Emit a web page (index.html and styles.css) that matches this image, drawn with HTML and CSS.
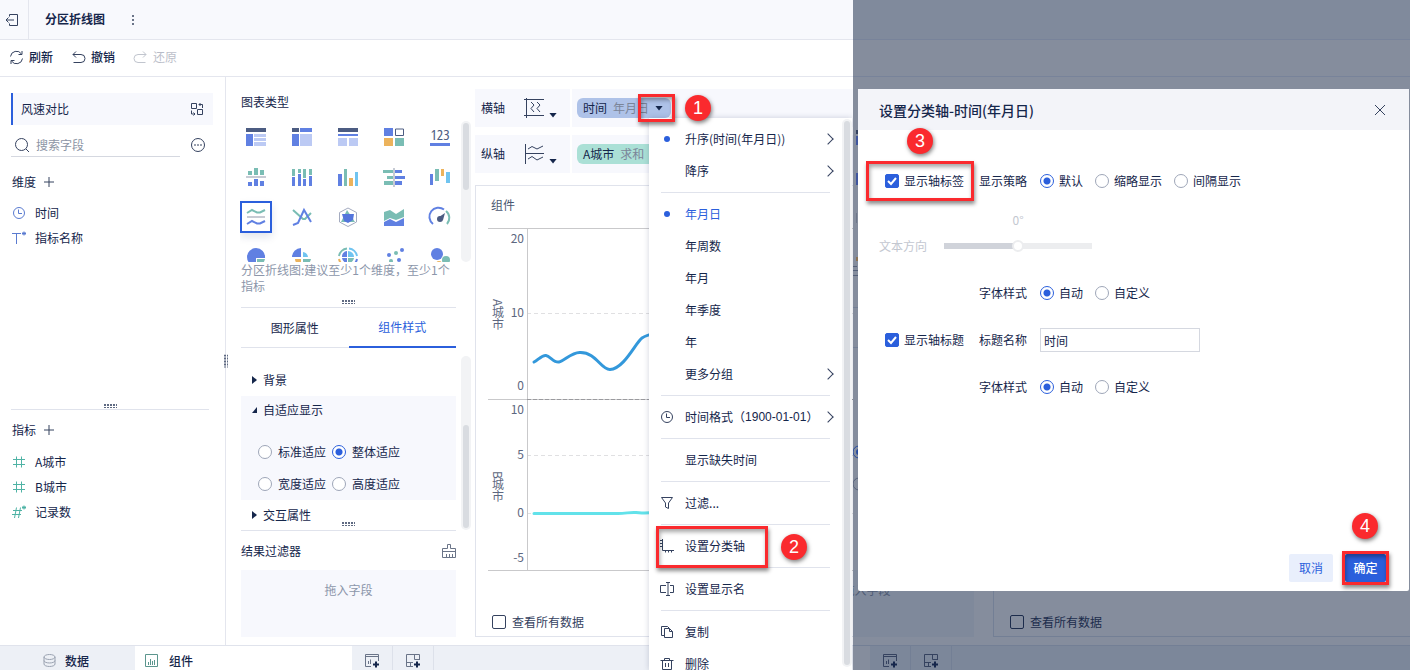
FILE: index.html
```html
<!DOCTYPE html>
<html lang="zh-CN">

<head>
    <meta charset="UTF-8">
    <meta name="viewport" content="width=device-width, initial-scale=1.0">
    <title>分区折线图</title>
    <link rel="stylesheet" href="styles.css">
</head>

<body>

    <div class="page">
        <div class="workspace">
            <header class="topbar">
                <button class="exit" aria-label="退出">
                    <svg width="14" height="14" viewBox="0 0 14 14" class="line"><path d="M4.500 3.500V1.500H12.500V12.500H4.500V10.500M9 7H1M3.500 4.500L1 7L3.500 9.500" /></svg>
                </button>
                <h1>分区折线图</h1>
                <button class="more" aria-label="更多">
                    <svg width="4" height="12" viewBox="0 0 4 12"><path d="M1 1h2v2H1zM1 5h2v2H1zM1 9h2v2H1z" fill="#6a7488" /></svg>
                </button>
            </header>

            <div class="toolbar">
                <button>
                    <svg width="15" height="15" viewBox="0 0 15 15" class="line"><path d="M1.500 6.500A6 6 0 0 1 12.500 4M13.500 8.500A6 6 0 0 1 2.500 11M13 1v3.500H9.500M2 14v-3.500H5.500" /></svg>
                    刷新
                </button>
                <button>
                    <svg width="15" height="15" viewBox="0 0 15 15" class="line"><path d="M5 1.500L2 4.500L5 7.500M2 4.500H10A3.500 3.500 0 0 1 10 12.500H2.500" /></svg>
                    撤销
                </button>
                <button disabled>
                    <svg width="15" height="15" viewBox="0 0 15 15" class="line"><path d="M10 1.500L13 4.500L10 7.500M13 4.500H5A3.500 3.500 0 0 0 5 12.500H12.500" /></svg>
                    还原
                </button>
            </div>

            <div class="main">
                <aside class="fields">
                    <section class="dimensions">
                        <div class="dataset">
                            <span>风速对比</span>
                            <button aria-label="切换数据">
                                <svg width="14" height="14" viewBox="0 0 14 14" class="line"><path d="M1.500 1.500h5v5h-5zM7.500 7.500h5v5h-5zM9 2.500h3.500V6M10.500 1L9 2.500L10.500 4M1.500 8.500V12H5M3.500 10.500L5 12L3.500 13.500" /></svg>
                            </button>
                        </div>
                        <div class="search-row">
                            <label class="search">
                                <svg width="16" height="16" viewBox="0 0 16 16" class="line"><circle cx="7.500" cy="7.500" r="6" /><path d="M12 12L15 15" /></svg>
                                <input type="text" placeholder="搜索字段" aria-label="搜索字段">
                            </label>
                            <button aria-label="更多字段操作">
                                <svg width="16" height="16" viewBox="0 0 16 16" class="line"><circle cx="8" cy="8" r="6.500" /><path d="M4 8h2M7 8h2M10 8h2" /></svg>
                            </button>
                        </div>
                        <h2>维度 <button class="plus" aria-label="添加维度"><svg width="10" height="10" viewBox="0 0 10 10" class="line"><path d="M5 0V10M0 5H10" /></svg></button></h2>
                        <ul>
                            <li>
                                <svg width="14" height="14" viewBox="0 0 14 14" class="line blue"><circle cx="7" cy="7" r="5.500" /><path d="M6.500 3.500V7.500H10" /></svg>
                                时间
                            </li>
                            <li>
                                <svg width="14" height="14" viewBox="0 0 14 14" class="line blue"><path d="M0 2.500H9M4.500 2.500V13M10 2.500H14M12 0.500V4.500M10.500 1L13.500 4M13.500 1L10.500 4" /></svg>
                                指标名称
                            </li>
                        </ul>
                    </section>
                    <div class="splitter"><i class="dots"></i></div>
                    <section class="metrics">
                        <h2>指标 <button class="plus" aria-label="添加指标"><svg width="10" height="10" viewBox="0 0 10 10" class="line"><path d="M5 0V10M0 5H10" /></svg></button></h2>
                        <ul>
                            <li>
                                <svg width="14" height="14" viewBox="0 0 14 14" class="line teal"><path d="M1 4.500H13M1 9.500H13M4.500 1.500V12.500M9.500 1.500V12.500" /></svg>
                                A城市
                            </li>
                            <li>
                                <svg width="14" height="14" viewBox="0 0 14 14" class="line teal"><path d="M1 4.500H13M1 9.500H13M4.500 1.500V12.500M9.500 1.500V12.500" /></svg>
                                B城市
                            </li>
                            <li>
                                <svg width="14" height="14" viewBox="0 0 14 14" class="line teal"><path d="M1 5.500H10M0 9.500H9M4.500 2.500L2.500 13M8.500 2.500L6.500 13M10 2.500H14M12 0.500V4.500M10.500 1L13.500 4M13.500 1L10.500 4" /></svg>
                                记录数
                            </li>
                        </ul>
                    </section>
                    <i class="dots side-dots"></i>
                </aside>

                <section class="config">
                    <h2>图表类型</h2>
                    <div class="scroll-area types-area">
                        <div class="chart-types">
                            <button aria-label="分组表"><svg viewBox="0 0 32 32"><path fill="#4c5c82" d="M6 7h20v4H6z" /><path fill="#6080e2" d="M6 13h7v12H6z" /><path fill="#bccaf4" d="M14 13h12v3H14zM14 17h12v3H14zM14 21h12v4H14z" /></svg></button>
                            <button aria-label="交叉表"><svg viewBox="0 0 32 32"><path fill="#4c5c82" d="M6 7h7v4H6z" /><path fill="#6080e2" d="M14 7h12v4H14zM6 13h7v12H6z" /><path fill="#bccaf4" d="M14 13h12v12H14z" /></svg></button>
                            <button aria-label="明细表"><svg viewBox="0 0 32 32"><path fill="#4c5c82" d="M6 7h20v4H6z" /><path fill="#6080e2" d="M6 13h20v2H6z" /><path fill="#bccaf4" d="M6 17h9v8H6zM17 17h9v8h-9z" /></svg></button>
                            <button aria-label="颜色表格"><svg viewBox="0 0 32 32"><path fill="#6080e2" d="M6 7h9v8H6z" /><path fill="none" stroke="#4c5c82" d="M17.500 8h8v6.500h-8z" /><path fill="#ecb35c" d="M6 17h9v8H6z" /><path fill="#7abdb4" d="M17 17h9v8h-9z" /></svg></button>
                            <button aria-label="指标卡"><svg viewBox="0 0 32 32"><text x="16" y="19" class="kpi">123</text><path fill="#6080e2" d="M6 22h20v3H6z" /></svg></button>

                            <button aria-label="对比柱形图"><svg viewBox="0 0 32 32"><path fill="#7abdb4" d="M8 10h4v4H8zM14 7h4v7h-4zM20 9h4v5h-4z" /><path fill="#c7cbd4" d="M6 15h20v2H6z" /><path fill="#6080e2" d="M8 21h4v4H8zM14 18h4v7h-4zM20 20h4v5h-4z" /></svg></button>
                            <button aria-label="堆积柱形图"><svg viewBox="0 0 32 32"><path fill="#7abdb4" d="M6 8h3v7H6zM12 8h3v4h-3zM17 8h3v9h-3zM23 8h3v6h-3z" /><path fill="#6080e2" d="M6 16h3v9H6zM12 13h3v12h-3zM17 18h3v7h-3zM23 15h3v10h-3z" /></svg></button>
                            <button aria-label="多系列柱形图"><svg viewBox="0 0 32 32"><path fill="#6080e2" d="M6 13h4v12H6z" /><path fill="#7abdb4" d="M12 8h3v17h-3z" /><path fill="#ecb35c" d="M17 17h4v8h-4z" /><path fill="#70c4f0" d="M23 11h3v14h-3z" /></svg></button>
                            <button aria-label="对比条形图"><svg viewBox="0 0 32 32"><path fill="#7abdb4" d="M5 9h10v3H5zM9 15h6v3H9zM6 20h9v4H6z" /><path fill="#c7cbd4" d="M15 7h2v19h-2z" /><path fill="#6080e2" d="M17 9h7v3h-7zM17 15h10v3H17zM17 20h7v4h-7z" /></svg></button>
                            <button aria-label="瀑布图"><svg viewBox="0 0 32 32"><path fill="#6080e2" d="M6 13h3v11H6z" /><path fill="#7abdb4" d="M11 8h4v12h-4z" /><path fill="#ecb35c" d="M17 8h3v7h-3z" /><path fill="#70c4f0" d="M22 11h4v11h-4z" /></svg></button>

                            <button class="selected" aria-label="分区折线图"><svg viewBox="0 0 32 32"><path fill="#c7cbd4" d="M7 15h18v2H7z" /><path class="stroke" stroke="#7abdb4" d="M7 12L12 9L17 11.500H20L25 9" /><path class="stroke" stroke="#6080e2" d="M7 23L12 20L17 22.500H20L25 20" /></svg></button>
                            <button aria-label="多系列折线图"><svg viewBox="0 0 32 32"><path class="stroke" stroke="#7abdb4" d="M7 9L17 18H19L25 12" /><path class="stroke" stroke="#6080e2" d="M7 24L12 22L18 9L25 21" /></svg></button>
                            <button aria-label="雷达图"><svg viewBox="0 0 32 32"><path fill="none" stroke="#a4abc0" d="M16 7L24.500 11.500V21L16 25.500L7.500 21V11.500z" /><path fill="#7abdb4" d="M15 9L23 21H9z" /><path fill="#5475dc" d="M10 13H22L21 19L16 22L12 20z" /></svg></button>
                            <button aria-label="面积图"><svg viewBox="0 0 32 32"><path fill="#7abdb4" d="M6 11L12 9L18 13L26 8V16L18 19L12 17L6 20z" /><path fill="#6080e2" d="M6 21L12 18L18 21L26 17V25H6z" /></svg></button>
                            <button aria-label="仪表盘"><svg viewBox="0 0 32 32"><path class="stroke" stroke="#6080e2" d="M9 23A9 9 0 0 1 20 8.500" /><path class="stroke" stroke="#7abdb4" d="M22 10A9 9 0 0 1 23 23" /><circle cx="16" cy="18" r="3" fill="#4c5c82" /><path d="M15 16L21 12L19 19z" fill="#4c5c82" /></svg></button>

                            <button aria-label="饼图"><svg viewBox="0 0 32 32"><path fill="#6080e2" d="M16 7A9 9 0 1 0 16 25V17H25A9 9 0 0 0 16 7z" /><path fill="#7abdb4" d="M17 18H25A9 9 0 0 1 17 25z" /></svg></button>
                            <button aria-label="玫瑰图"><svg viewBox="0 0 32 32"><path fill="#6080e2" d="M15 7V16H6A9 9 0 0 1 15 7z" /><path fill="#70c4f0" d="M17 11A6 6 0 0 1 22 16H17z" /><path fill="#ecb35c" d="M9 18H15V24A6 6 0 0 1 9 18z" /><path fill="#7abdb4" d="M17 18H25A9 9 0 0 1 17 25z" /></svg></button>
                            <button aria-label="多层饼图"><svg viewBox="0 0 32 32"><path class="stroke" stroke="#7abdb4" d="M7 15A9 9 0 0 1 15 7.500" /><path class="stroke" stroke="#70c4f0" d="M17 7.500A9 9 0 0 1 25 15" /><path class="stroke" stroke="#ecb35c" d="M7 18A9 9 0 0 0 15 25" /><path class="stroke" stroke="#6080e2" d="M25 18A9 9 0 0 1 17 25" /><path fill="#6080e2" d="M15 10V16H10A6 6 0 0 1 15 10zM10 17H15V22A6 6 0 0 1 10 17z" /><path fill="#70c4f0" d="M16 10A6 6 0 0 1 22 16H16z" /><path fill="#7abdb4" d="M16 17H22A6 6 0 0 1 16 22z" /></svg></button>
                            <button aria-label="散点图"><svg viewBox="0 0 32 32"><g fill="#6080e2"><circle cx="24" cy="9" r="2" /><circle cx="11" cy="14" r="2" /><circle cx="21" cy="19" r="2" /></g><g fill="#7abdb4"><circle cx="18" cy="12" r="2" /><circle cx="13" cy="20" r="2" /></g></svg></button>
                            <button aria-label="聚合气泡图"><svg viewBox="0 0 32 32"><circle cx="13" cy="13" r="6" fill="#6080e2" /><circle cx="22" cy="19" r="4" fill="#7abdb4" /><circle cx="15" cy="23" r="3" fill="#ecb35c" /></svg></button>
                        </div>
                        <div class="scrollbar"><i class="thumb-top"></i></div>
                    </div>
                    <p class="hint">分区折线图:建议至少1个维度，至少1个指标</p>
                    <div class="splitter"><i class="dots"></i></div>
                    <div class="tabs">
                        <button>图形属性</button>
                        <button class="active">组件样式</button>
                    </div>
                    <div class="scroll-area style-area">
                        <div class="accordion">
                            <button class="fold">背景</button>
                            <div class="opened">
                                <button class="fold open">自适应显示</button>
                                <div class="options">
                                    <label><input type="radio" name="fit"> 标准适应</label>
                                    <label><input type="radio" name="fit" checked> 整体适应</label>
                                    <label><input type="radio" name="fit"> 宽度适应</label>
                                    <label><input type="radio" name="fit"> 高度适应</label>
                                </div>
                            </div>
                            <button class="fold">交互属性</button>
                        </div>
                        <div class="scrollbar"><i class="thumb-bottom"></i></div>
                    </div>
                    <div class="splitter overlap"><i class="dots"></i></div>
                    <div class="filter-head">
                        <h2>结果过滤器</h2>
                        <button aria-label="清空过滤器">
                            <svg width="14" height="14" viewBox="0 0 14 14" class="line soft"><path d="M5.500 4.500V0.500H8.500V4.500H13.500V13.500H0.500V4.500H5.500M0.500 7.500H13.500M4.500 10V13M7.500 10V13M10.500 10V13" /></svg>
                        </button>
                    </div>
                    <div class="dropzone">拖入字段</div>
                </section>

                <section class="content">
                    <div class="axis-row">
                        <div class="axis-label">
                            横轴
                            <svg width="20" height="20" viewBox="0 0 20 20" class="line"><path d="M0 1.500H20M0 17.500H20M2.500 0V20M7 4L10 7L7 10.500L10 14M13 4L16 7L13 10.500L16 14" /></svg>
                            <i class="caret"></i>
                        </div>
                        <div class="axis-fields">
                            <span class="chip chip-dim">
                                <b>时间</b> 年月日 <i class="caret"></i>
                                <span class="mark mark-arrow"></span>
                                <span class="badge badge-1">1</span>
                            </span>
                        </div>
                    </div>
                    <div class="axis-row">
                        <div class="axis-label">
                            纵轴
                            <svg width="20" height="20" viewBox="0 0 20 20" class="line"><path d="M1.500 0V20M1 9.500H20M4 5L8 2.500L13 5L19 2M4 15L8 12.500L13 16L19 13" /></svg>
                            <i class="caret"></i>
                        </div>
                        <div class="axis-fields">
                            <span class="chip chip-metric"><b>A城市</b> 求和</span>
                        </div>
                    </div>
                    <div class="preview">
                        <h3>组件</h3>
                        <svg class="chart" role="img" aria-label="分区折线图">
                            <g stroke="#e0e0e2" stroke-dasharray="4 3">
                                <line x1="39" y1="85.500" x2="100%" y2="85.500" />
                                <line x1="39" y1="227.500" x2="100%" y2="227.500" />
                                <line x1="39" y1="285.500" x2="100%" y2="285.500" />
                            </g>
                            <g stroke="#c9c9cb">
                                <line x1="0" y1="0.500" x2="100%" y2="0.500" />
                                <line x1="0" y1="171.500" x2="100%" y2="171.500" />
                                <line x1="0" y1="342.500" x2="100%" y2="342.500" />
                                <line x1="39.500" y1="0" x2="39.500" y2="343" />
                            </g>
                            <line x1="39" y1="171.500" x2="100%" y2="171.500" stroke="#9a9a9e" stroke-dasharray="4 2" />
                            <g class="ticks">
                                <text x="36" y="15">20</text>
                                <text x="36" y="89">10</text>
                                <text x="36" y="162">0</text>
                                <text x="36" y="186">10</text>
                                <text x="36" y="231">5</text>
                                <text x="36" y="289">0</text>
                                <text x="36" y="334">-5</text>
                            </g>
                            <text x="10" y="71" class="axis-title">A城市</text>
                            <text x="10" y="243" class="axis-title">B城市</text>
                            <path class="series" stroke="#3398db" d="M46 134C50 132 54 127 58 127.500S66 135 71 134S84 124 92 124.500C108 124 113 142 122 141.500C136 141 148 114 154 110C160 106 165 106 172 104" />
                            <path class="series" stroke="#62e2ea" d="M46 285.500H130C138 285.500 142 284 148 284.500S158 286 166 284" />
                        </svg>
                        <label class="show-all"><input type="checkbox"> 查看所有数据</label>
                    </div>
                </section>
            </div>

            <footer class="bottom-tabs">
                <button class="tab-data">
                    <svg width="13" height="13" viewBox="0 0 13 13" class="line gray"><ellipse cx="6.500" cy="3" rx="5.500" ry="2.500" /><path d="M1 3V10C1 13.300 12 13.300 12 10V3M1 6.500C1 9.800 12 9.800 12 6.500" /></svg>
                    数据
                </button>
                <button class="tab-component">
                    <svg width="13" height="13" viewBox="0 0 13 13" class="line green"><path d="M0.500 0.500H12.500V12.500H0.500zM3.500 8V11M5.500 5V11M7.500 7V11M9.500 6V11" /></svg>
                    组件
                </button>
                <button class="tab-add" aria-label="添加组件">
                    <svg width="14" height="14" viewBox="0 0 14 14" class="line soft"><path d="M13.500 7V0.500H0.500V12.500H6M0.500 2.500H13.500M3.500 7V10M5.500 5.500V10" /><path class="plus-sign" d="M8 10.500H14M11 7.500V13.500" /></svg>
                </button>
                <button class="tab-add" aria-label="添加仪表板">
                    <svg width="14" height="14" viewBox="0 0 14 14" class="line soft"><path d="M13.500 6V0.500H0.500V12.500H7M8.500 0.500V5.500H13.500M0.500 8.500H7M4.500 8.500V12.500" /><path class="plus-sign" d="M8 10.500H14M11 7.500V13.500" /></svg>
                </button>
            </footer>

            <div class="menu">
                <ul>
                    <li><button><span class="ico"><i class="dot"></i></span>升序(时间(年月日))<i class="arrow"></i></button></li>
                    <li class="line-after"><button><span class="ico"></span>降序<i class="arrow"></i></button></li>
                    <li><button class="current"><span class="ico"><i class="dot"></i></span>年月日</button></li>
                    <li><button><span class="ico"></span>年周数</button></li>
                    <li><button><span class="ico"></span>年月</button></li>
                    <li><button><span class="ico"></span>年季度</button></li>
                    <li><button><span class="ico"></span>年</button></li>
                    <li class="line-after"><button><span class="ico"></span>更多分组<i class="arrow"></i></button></li>
                    <li class="line-after"><button>
                        <span class="ico"><svg width="14" height="14" viewBox="0 0 14 14" class="line"><circle cx="7" cy="7" r="5.500" /><path d="M6.500 3.500V7.500H10" /></svg></span>时间格式（<span class="latin">1900-01-01</span>）<i class="arrow"></i></button></li>
                    <li class="line-after"><button><span class="ico"></span>显示缺失时间</button></li>
                    <li class="line-after"><button>
                        <span class="ico"><svg width="14" height="14" viewBox="0 0 14 14" class="line"><path d="M1.500 1.500H12.500L8.500 7V12.500L5.500 11V7z" /></svg></span>过滤...</button></li>
                    <li class="line-after"><button>
                        <span class="ico"><svg width="14" height="14" viewBox="0 0 14 14" class="line"><path d="M2.500 0V11.500H14M0 1.500H2.500M0 4.500H2.500M0 7.500H2.500M5.500 11V13.500M8.500 11V13.500M11.500 11V13.500" /></svg></span>设置分类轴</button>
                        <span class="mark mark-axis"></span>
                        <span class="badge badge-2">2</span>
                    </li>
                    <li class="line-after"><button>
                        <span class="ico"><svg width="14" height="14" viewBox="0 0 14 14" class="line"><path d="M6 3.500H0.500V10.500H6M10 3.500H13.500V10.500H10M6 0.500H10M8 0.500V13.500M6 13.500H10" /></svg></span>设置显示名</button></li>
                    <li><button>
                        <span class="ico"><svg width="14" height="14" viewBox="0 0 14 14" class="line"><path d="M4.500 3.500H9.500L12.500 6.500V12.500H4.500zM9.500 3.500V6.500H12.500M4 10.500H1.500V1.500H7.500L9 3" /></svg></span>复制</button></li>
                    <li><button>
                        <span class="ico"><svg width="14" height="14" viewBox="0 0 14 14" class="line"><path d="M0.500 3.500H13.500M4.500 3V1.500H9.500V3M2.500 3.500V12.500H11.500V3.500M5.500 6V10M8.500 6V10" /></svg></span>删除</button></li>
                </ul>
                <div class="scrollbar"><i class="thumb-full"></i></div>
            </div>
        </div>

        <div class="dialog-view">
            <div class="dimmed">
                <div class="dim-topbar"></div>
                <div class="dim-toolbar"></div>
                <div class="dim-main">
                    <div class="dim-dropzone">拖入字段</div>
                    <div class="dim-preview">
                        <label class="show-all"><input type="checkbox"> 查看所有数据</label>
                    </div>
                </div>
                <div class="dim-tabs">
                    <span>
                        <svg width="14" height="14" viewBox="0 0 14 14" class="line"><path d="M13.500 7V0.500H0.500V12.500H6M0.500 2.500H13.500M3.500 7V10M5.500 5.500V10" /><path class="plus-sign" d="M8 10.500H14M11 7.500V13.500" /></svg>
                    </span>
                    <span>
                        <svg width="14" height="14" viewBox="0 0 14 14" class="line"><path d="M13.500 6V0.500H0.500V12.500H7M8.500 0.500V5.500H13.500M0.500 8.500H7M4.500 8.500V12.500" /><path class="plus-sign" d="M8 10.500H14M11 7.500V13.500" /></svg>
                    </span>
                </div>
                <!-- edges of the chart icons, lines and radios that stay visible left of the dialog -->
                <svg class="dim-edge" width="5" height="420" viewBox="0 0 5 420">
                    <path fill="#34425f" d="M3 41h2v4H3z" />
                    <path fill="#40569e" d="M3 47h2v9H3zM3 84h2v12H3z" />
                    <path fill="#6d7689" d="M3 124h1v10H3z" />
                    <path fill="#8b7355" d="M3 168h2v4H3z" />
                    <path stroke="#56617a" d="M0 177.500H4M0 181.500H5M0 186.500H5" />
                    <path stroke="#737f95" d="M0 218.500H5M0 258.500H5" />
                    <circle cx="6" cy="363" r="6" fill="none" stroke="#244a9f" />
                    <circle cx="6" cy="363" r="3" fill="#244a9f" />
                    <circle cx="6" cy="395" r="6" fill="none" stroke="#56617a" />
                </svg>
            </div>

            <form class="dialog">
                <header>
                    <h2>设置分类轴-时间(年月日)</h2>
                    <button type="button" aria-label="关闭">
                        <svg width="12" height="12" viewBox="0 0 12 12" class="line"><path d="M1 1L11 11M11 1L1 11" /></svg>
                    </button>
                </header>
                <div class="form-body">
                    <div class="form-row">
                        <div class="toggle">
                            <label><input type="checkbox" checked> 显示轴标签</label>
                            <span class="mark mark-label"></span>
                            <span class="badge badge-3">3</span>
                        </div>
                        <span class="name">显示策略</span>
                        <label><input type="radio" name="strategy" checked> 默认</label>
                        <label><input type="radio" name="strategy"> 缩略显示</label>
                        <label><input type="radio" name="strategy"> 间隔显示</label>
                    </div>
                    <div class="slider-row">
                        <label for="direction">文本方向</label>
                        <div class="slider">
                            <output for="direction">0°</output>
                            <input type="range" id="direction" min="-90" max="90" value="0" disabled>
                        </div>
                    </div>
                    <div class="form-row">
                        <div class="toggle"></div>
                        <span class="name">字体样式</span>
                        <label><input type="radio" name="labelFont" checked> 自动</label>
                        <label><input type="radio" name="labelFont"> 自定义</label>
                    </div>
                    <div class="form-row">
                        <div class="toggle">
                            <label><input type="checkbox" checked> 显示轴标题</label>
                        </div>
                        <label class="name" for="axisTitle">标题名称</label>
                        <input type="text" id="axisTitle" value="时间">
                    </div>
                    <div class="form-row">
                        <div class="toggle"></div>
                        <span class="name">字体样式</span>
                        <label><input type="radio" name="titleFont" checked> 自动</label>
                        <label><input type="radio" name="titleFont"> 自定义</label>
                    </div>
                </div>
                <div class="actions">
                    <button type="button" class="cancel">取消</button>
                    <div class="confirm-wrap">
                        <button type="button" class="confirm">确定</button>
                        <span class="mark mark-confirm"></span>
                        <span class="badge badge-4">4</span>
                    </div>
                </div>
            </form>
        </div>
    </div>

</body>

</html>
```

FILE: styles.css
```css
* {
    box-sizing: border-box;
}

body {
    margin: 0;
    font-family: "Noto Sans CJK SC", sans-serif;
    font-size: 12px;
    line-height: 16px;
    color: #15264b;
    background: #fff;
}

h1,
h2,
h3,
p,
ul {
    margin: 0;
    padding: 0;
    font-size: 12px;
    font-weight: normal;
    list-style: none;
}

button {
    padding: 0;
    border: none;
    background: none;
    font: inherit;
    color: inherit;
    cursor: pointer;
    display: flex;
    align-items: center;
}

svg {
    display: block;
    flex: none;
}

.line {
    fill: none;
    stroke: #35425f;
    stroke-width: 1;
}

.line.blue {
    stroke: #5a7bd0;
}

.line.teal {
    stroke: #4fb3a5;
}

.line.gray {
    stroke: #9aa2b1;
}

.line.green {
    stroke: #5c968e;
}

.line.soft {
    stroke: #6a7488;
}

.plus-sign {
    stroke: #15264b;
    stroke-width: 2;
}

.page {
    display: grid;
    grid-template-columns: 60.5% 1fr;
    height: 100vh;
    overflow: hidden;
}

.workspace {
    position: relative;
    display: flex;
    flex-direction: column;
    min-width: 0;
    height: 100vh;
    overflow: hidden;
}

/* form controls */
input[type="radio"],
input[type="checkbox"] {
    appearance: none;
    flex: none;
    width: 14px;
    height: 14px;
    margin: 0;
    border: 1px solid #9ea6b8;
    background: #fff;
}

input[type="radio"] {
    border-radius: 50%;
}

input[type="radio"]:checked {
    border-color: #2b5fdc;
    background: radial-gradient(circle, #2b5fdc 3px, #fff 4px);
}

input[type="checkbox"] {
    border: 1px solid #35425f;
    border-radius: 2px;
}

input[type="checkbox"]:checked {
    border-color: #2b5fdc;
    background: #2b5fdc url("data:image/svg+xml,%3Csvg xmlns='http://www.w3.org/2000/svg' viewBox='0 0 12 12'%3E%3Cpath d='M2 6l3 3 5-6' fill='none' stroke='white' stroke-width='2'/%3E%3C/svg%3E");
}

label {
    display: flex;
    align-items: center;
    gap: 6px;
    white-space: nowrap;
}

/* top */
.topbar {
    display: flex;
    align-items: stretch;
    height: 40px;
    flex: none;
    background: #f8f9fd;
    border-bottom: 1px solid #e4e6ee;
}

.exit {
    width: 29px;
    padding-left: 5px;
    border-right: 1px solid #e4e6ee;
}

.topbar h1 {
    padding-left: 16px;
    line-height: 38px;
    font-weight: bold;
}

.more {
    margin-left: 26px;
}

.toolbar {
    display: flex;
    gap: 18px;
    height: 37px;
    flex: none;
    padding: 0 0 2px 9px;
    border-bottom: 1px solid #e4e6ee;
}

.toolbar button {
    gap: 5px;
    font-weight: 500;
}

.toolbar button:disabled {
    opacity: 0.3;
    font-weight: normal;
}

.main {
    display: flex;
    flex: 1;
    min-height: 0;
}

/* field list */
.fields {
    position: relative;
    display: flex;
    flex-direction: column;
    flex: none;
    width: 226px;
    padding: 16px 12px 0 11px;
    border-right: 1px solid #e4e6ee;
}

.dimensions {
    flex: 1;
}

.metrics {
    height: 235px;
}

.dataset {
    display: flex;
    align-items: center;
    justify-content: space-between;
    height: 32px;
    padding: 0 9px 0 8px;
    border-left: 2px solid #2b5fdc;
    background: #f7f8fd;
}

.search-row {
    display: flex;
    align-items: center;
    justify-content: space-between;
    height: 40px;
    padding-right: 7px;
}

.search {
    width: 169px;
    height: 24px;
    padding-left: 3px;
    border-bottom: 1px solid #d5d8e0;
}

.search input {
    flex: 1;
    min-width: 0;
    padding: 0;
    border: none;
    outline: none;
    font: inherit;
}

.search input::placeholder {
    color: #8d95a5;
}

.fields h2 {
    display: flex;
    align-items: center;
    gap: 8px;
    height: 32px;
    padding-left: 1px;
}

.dimensions h2 {
    margin-top: 1px;
}

.metrics h2 {
    height: 40px;
}

.fields li {
    display: flex;
    align-items: center;
    gap: 9px;
    height: 25px;
    padding-left: 1px;
}

.dimensions ul {
    padding-top: 2px;
}

.metrics ul {
    margin-top: -1px;
}

.splitter {
    display: flex;
    justify-content: center;
    border-bottom: 1px solid #e0e3ec;
    padding-bottom: 3px;
}

.fields .splitter {
    margin-right: 4px;
    padding-bottom: 1px;
}

.dots {
    width: 13px;
    height: 4px;
    background: radial-gradient(circle at 1px 1px, #5f6a82 1px, transparent 1px) 0 0 / 3px 3px;
}

.side-dots {
    position: absolute;
    right: -3px;
    top: 50%;
    width: 4px;
    height: 13px;
    transform: translateY(-50%);
}

/* chart config */
.config {
    display: flex;
    flex-direction: column;
    flex: none;
    width: 249px;
    padding: 0 19px 8px 15px;
}

.config > h2 {
    padding-top: 17px;
    height: 44px;
}

.scroll-area {
    display: flex;
    gap: 5px;
    margin-right: -15px;
}

.types-area {
    height: 141px;
    flex: none;
}

.chart-types {
    display: grid;
    grid-template-columns: repeat(5, 32px);
    grid-auto-rows: 32px;
    column-gap: 14px;
    row-gap: 8px;
    flex: 1;
    margin-left: -1px;
    overflow: hidden;
}

.chart-types svg {
    width: 32px;
    height: 32px;
}

.chart-types .selected {
    outline: 2px solid #2b5fdc;
    outline-offset: -2px;
    box-shadow: 0 4px 8px rgba(20, 40, 90, 0.12);
}

.stroke {
    fill: none;
    stroke-width: 2;
}

.kpi {
    font-family: "Open Sans", sans-serif;
    font-size: 15px;
    font-stretch: condensed;
    text-anchor: middle;
    fill: #4c5c82;
}

.scrollbar {
    flex: none;
    display: flex;
    flex-direction: column;
    width: 10px;
    padding: 2px;
    border-radius: 5px;
    background: #f2f3f5;
}

.scrollbar i {
    border-radius: 3px;
    background: #d9dce1;
}

.thumb-top {
    height: 67px;
}

.thumb-bottom {
    height: 103px;
    margin-top: auto;
}

.thumb-full {
    flex: 1;
}

.hint {
    height: 38px;
    color: #8c96aa;
}

.tabs {
    display: flex;
    height: 40px;
    flex: none;
}

.tabs button {
    flex: 1;
    justify-content: center;
    border-bottom: 1px solid #e0e3ec;
}

.tabs .active {
    color: #2b5fdc;
    border-bottom: 2px solid #2b5fdc;
}

.style-area {
    flex: 1;
    min-height: 0;
    margin-top: 8px;
}

.accordion {
    flex: 1;
    padding-top: 8px;
    overflow: hidden;
}

.fold {
    width: 100%;
    height: 32px;
    gap: 6px;
    padding-left: 11px;
}

.fold::before {
    content: "";
    width: 5px;
    height: 8px;
    background: #15264b;
    clip-path: polygon(0 0, 100% 50%, 0 100%);
}

.fold.open::before {
    height: 6px;
    clip-path: polygon(100% 0, 100% 100%, 0 100%);
}

.opened {
    background: #f7f8fd;
}

.opened .fold {
    height: 28px;
}

.opened + .fold {
    height: 30px;
}

.options {
    display: grid;
    grid-template-columns: max-content max-content;
    grid-auto-rows: 32px;
    column-gap: 6px;
    padding: 12px 0 0 17px;
}

.splitter.overlap {
    margin-top: -8px;
    padding-bottom: 4px;
    z-index: 1;
}

.filter-head {
    display: flex;
    align-items: center;
    justify-content: space-between;
    height: 39px;
    flex: none;
}

.dropzone {
    flex: none;
    height: 67px;
    padding-top: 12px;
    text-align: center;
    color: #8c96aa;
    background: #f7f8fd;
}

/* canvas */
.content {
    display: flex;
    flex-direction: column;
    flex: 1;
    min-width: 0;
    padding: 12px 0 8px;
}

.axis-row {
    display: flex;
    gap: 2px;
    height: 38px;
    margin-bottom: 8px;
}

.axis-label {
    display: flex;
    align-items: center;
    width: 95px;
    padding-left: 6px;
    background: #f7f8fd;
}

.axis-label svg {
    margin-left: 19px;
}

.caret {
    width: 8px;
    height: 5px;
    background: #15264b;
    clip-path: polygon(0 0, 100% 0, 50% 100%);
}

.axis-label .caret {
    margin: 14px 0 0 5px;
}

.axis-fields {
    display: flex;
    align-items: center;
    flex: 1;
    padding-left: 5px;
    background: #f7f8fd;
}

.chip {
    position: relative;
    display: flex;
    align-items: center;
    gap: 6px;
    width: 94px;
    height: 20px;
    padding-left: 6px;
    border-radius: 6px;
    color: #7b8599;
}

.chip b {
    font-weight: normal;
    color: #15264b;
}

.chip-dim {
    background: #aec2e8;
}

.chip-metric {
    background: #abe0d6;
}

.preview {
    display: flex;
    flex-direction: column;
    flex: 1;
    margin-top: 4px;
    padding-left: 12px;
    border: 1px solid #e0e3ec;
    border-right: none;
}

.preview h3 {
    height: 42px;
    padding: 11px 0 0 3px;
    color: #4a5670;
}

.chart {
    width: 100%;
    height: 343px;
}

.ticks {
    fill: #5d6780;
    text-anchor: end;
}

.axis-title {
    fill: #5d6780;
    writing-mode: vertical-rl;
}

.series {
    fill: none;
    stroke-width: 3;
    stroke-linecap: round;
}

.show-all {
    color: #35425f;
}

.preview .show-all {
    margin: auto 0 6px 4px;
}

/* bottom tabs */
.bottom-tabs {
    display: flex;
    align-items: flex-start;
    flex: none;
    height: 25px;
    overflow: hidden;
    background: #edf0f6;
    border-top: 1px solid #e0e3ec;
}

.bottom-tabs button {
    height: 29px;
    gap: 9px;
    font-weight: 500;
}

.tab-data {
    width: 135px;
    padding-left: 43px;
}

.bottom-tabs .tab-component {
    width: 217px;
    padding-left: 10px;
    gap: 11px;
    background: #fff;
}

.tab-add {
    width: 41px;
    justify-content: center;
    border-right: 1px solid #dde1ea;
}

/* drop-down menu */
.menu {
    position: absolute;
    top: 118px;
    right: 1px;
    bottom: 0;
    z-index: 10;
    display: flex;
    width: 203px;
    padding-top: 1px;
    background: #fff;
    box-shadow: 0 0 6px rgba(30, 45, 80, 0.2);
}

.menu ul {
    flex: 1;
    padding: 4px 12px 0;
}

.menu li {
    position: relative;
}

.menu button {
    width: 100%;
    height: 32px;
    white-space: nowrap;
}

.menu .line-after {
    padding-bottom: 5px;
    margin-bottom: 5px;
    border-bottom: 1px solid #e0e3ec;
}

.menu .current {
    color: #2b5fdc;
}

.menu .scrollbar {
    margin-bottom: 3px;
}

.ico {
    display: flex;
    width: 24px;
}

.ico svg {
    margin-left: -1px;
}

.dot {
    width: 6px;
    height: 6px;
    margin-left: 3px;
    border-radius: 50%;
    background: #2b5fdc;
}

.arrow {
    width: 8px;
    height: 8px;
    margin: 0 -2px 0 auto;
    border: solid #35425f;
    border-width: 1px 1px 0 0;
    transform: rotate(45deg);
}

.latin {
    font-family: "Liberation Sans", sans-serif;
}

/* step callouts */
.mark {
    position: absolute;
    z-index: 20;
    border: 3px solid #fa2a2e;
    box-shadow: 1px 3px 4px rgba(0, 0, 0, 0.45), inset 1px 3px 4px rgba(0, 0, 0, 0.35);
    pointer-events: none;
}

.badge {
    position: absolute;
    z-index: 20;
    width: 26px;
    height: 26px;
    border-radius: 50%;
    background: #fa2a2e;
    box-shadow: 1px 2px 4px rgba(0, 0, 0, 0.5);
    color: #fff;
    font-family: "Liberation Sans", sans-serif;
    font-size: 18px;
    line-height: 26px;
    text-align: center;
}

.mark-arrow {
    top: -4px;
    right: -4px;
    width: 37px;
    height: 28px;
}

.badge-1 {
    top: -3px;
    left: 108px;
}

.mark-axis {
    top: -4px;
    left: -5px;
    width: 112px;
    height: 42px;
}

.badge-2 {
    top: 4px;
    left: 120px;
}

.mark-label {
    top: -8px;
    left: -19px;
    width: 108px;
    height: 40px;
}

.badge-3 {
    top: -41px;
    left: 22px;
}

.mark-confirm {
    inset: -3px;
}

.badge-4 {
    top: -41px;
    left: 7px;
}

/* page behind the dialog */
.dialog-view {
    position: relative;
    min-width: 0;
    overflow: hidden;
}

.dimmed {
    display: flex;
    flex-direction: column;
    height: 100%;
    background: #858d9d;
}

.dim-topbar {
    height: 40px;
    background: #808a9c;
    border-bottom: 1px solid #78839a;
}

.dim-toolbar {
    height: 37px;
    border-bottom: 1px solid #78839a;
}

.dim-main {
    display: flex;
    align-items: flex-end;
    gap: 19px;
    flex: 1;
    margin-left: -94px;
    padding: 108px 0 8px;
}

.dim-dropzone {
    width: 215px;
    height: 67px;
    padding-top: 12px;
    text-align: center;
    color: #4f5c75;
    background: #7f899b;
}

.dim-preview {
    display: flex;
    align-items: flex-end;
    flex: 1;
    align-self: stretch;
    padding: 0 0 6px 16px;
    border: solid #737f95;
    border-width: 0 0 1px 1px;
}

.dimmed .show-all {
    color: #1c2c4c;
}

.dimmed input {
    background: transparent;
    border-color: #1c2c4c;
}

.dim-edge {
    position: absolute;
    top: 89px;
    left: 0;
}

.dim-tabs {
    display: flex;
    align-items: flex-start;
    height: 25px;
    overflow: hidden;
    padding-left: 17px;
    border-top: 1px solid #737f95;
    background: linear-gradient(to right, #858d9d 17px, #7c879a 17px);
}

.dim-tabs span {
    display: flex;
    align-items: center;
    justify-content: center;
    width: 41px;
    height: 29px;
    border-right: 1px solid #737f95;
}

/* dialog */
.dialog {
    position: absolute;
    top: 89px;
    left: 5px;
    right: 1px;
    background: #fff;
    border-radius: 2px;
}

.dialog header {
    display: flex;
    align-items: center;
    justify-content: space-between;
    height: 41px;
    padding: 0 23px 0 21px;
    background: #f3f4f9;
}

.dialog h2 {
    font-size: 14px;
    font-weight: 500;
}

.form-body {
    padding-top: 39px;
}

.form-row {
    display: flex;
    align-items: center;
    gap: 12px;
    height: 24px;
    padding-left: 27px;
    margin-bottom: 23px;
}

.toggle {
    position: relative;
    display: flex;
    align-items: center;
    width: 82px;
    height: 24px;
}

.form-row label {
    gap: 5px;
}

.form-row .name {
    width: 49px;
}

.form-row input[type="text"] {
    width: 160px;
    height: 24px;
    padding: 0 3px;
    border: 1px solid #d5d8e0;
    font: inherit;
    color: inherit;
}

.slider-row {
    display: flex;
    align-items: flex-end;
    gap: 17px;
    height: 42px;
    padding: 0 0 4px 21px;
    color: #c3c7d0;
}

.slider-row + .form-row {
    margin-top: 23px;
}

.slider {
    display: flex;
    flex-direction: column;
    gap: 10px;
    width: 148px;
}

.slider output {
    text-align: center;
}

.slider input {
    appearance: none;
    width: 100%;
    height: 16px;
    margin: 0;
    background: linear-gradient(to right, #d0d3da 50%, #ecedef 50%) center / 100% 6px no-repeat;
    border-radius: 3px;
}

.slider input::-webkit-slider-thumb {
    appearance: none;
    width: 12px;
    height: 12px;
    border: 2px solid #ecedef;
    border-radius: 50%;
    background: #fff;
}

.actions {
    display: flex;
    justify-content: flex-end;
    gap: 12px;
    padding: 132px 23px 9px 0;
}

.actions button {
    justify-content: center;
    height: 28px;
    border-radius: 2px;
}

.cancel {
    width: 44px;
    color: #2b5fdc;
    background: #e9effc;
}

.confirm-wrap {
    position: relative;
}

.confirm {
    width: 41px;
    color: #fff;
    font-weight: 500;
    background: #2b5fdc;
}
```
